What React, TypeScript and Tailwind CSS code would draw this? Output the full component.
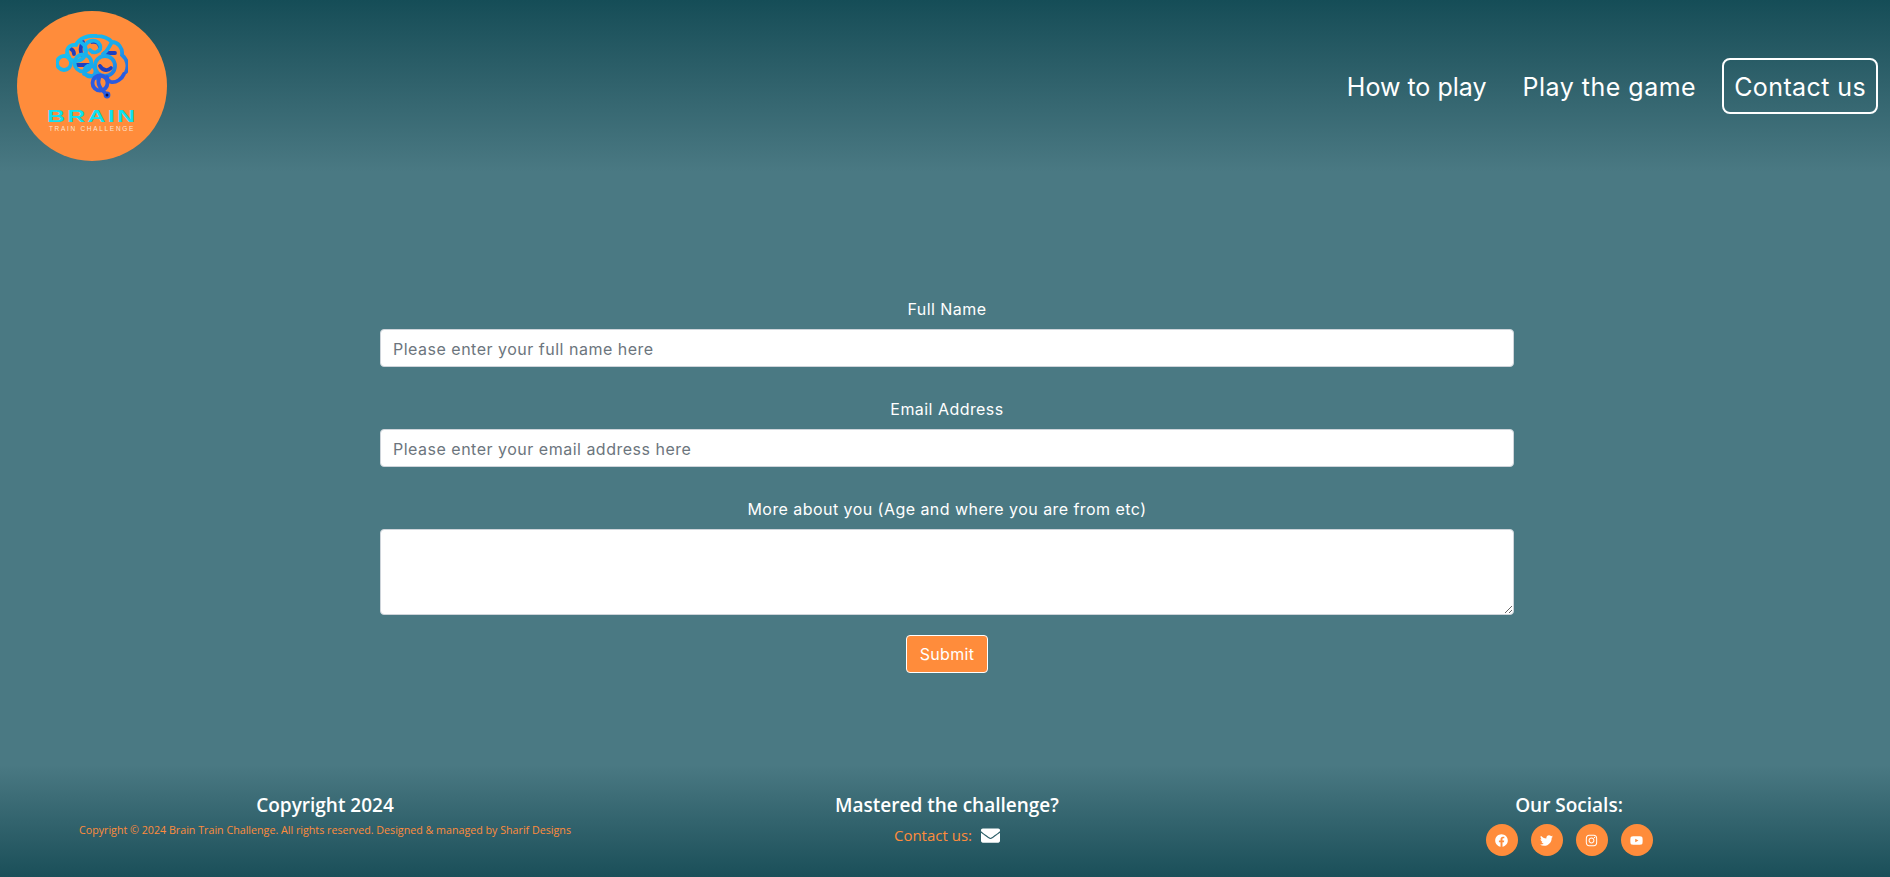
import { FaEnvelope, FaFacebook, FaInstagram, FaTwitter, FaYoutube } from "react-icons/fa";

function Brain() {
  return (
    <svg viewBox="56 34 72 66" className="w-[72px] h-[66px] shrink-0" fill="none" strokeLinecap="round">
      <defs>
        <linearGradient id="b" gradientUnits="userSpaceOnUse" x1="62" y1="38" x2="118" y2="92">
          <stop offset="0" stopColor="#17c4f2" />
          <stop offset="0.6" stopColor="#1aa6ea" />
          <stop offset="1" stopColor="#2b55dc" />
        </linearGradient>
      </defs>
      <g stroke="#1f3fbf" strokeWidth="3.8">
        <path d="M83 42c-3 5-3 9-1 13" />
        <path d="M71 49c2 1 3 3 3 5" />
        <path d="M76 65h13" />
        <path d="M105 53h10" />
        <path d="M100 66c3 5 8 5 11 2" />
        <path d="M92 42c5-1 8 2 8 6" />
      </g>
      <g stroke="url(#b)" strokeWidth="3.8">
        <circle cx="64" cy="63" r="7" />
        <path d="M69 57C64 49 70 44 76 45C79 38 88 35 97 36C103 36 108 38 112 42C118 42 123 48 122 55C127 59 129 66 126 72" />
        <circle cx="76" cy="51" r="10" strokeDasharray="38 25" transform="rotate(-60 76 51)" />
        <path d="M85 50C83 41 96 37 100 45C102 51 94 55 90 50" />
        <path d="M112 42c-3 5-5 10-9 12" />
        <circle cx="83" cy="63" r="8.5" />
        <circle cx="90" cy="71" r="5.5" />
        <circle cx="105" cy="66" r="10" />
        <path d="M84 74C90 76 94 76 98 79" />
      </g>
      <g stroke="#2a5be0" strokeWidth="3.8">
        <path d="M124 74c-2 5-8 9-13 8-3-1-4-3-4-5" />
        <circle cx="100" cy="83" r="7.5" />
        <path d="M100 76c-2 4-2 8 0 11 1 2 4 5 6 7" />
      </g>
      <circle cx="107" cy="95" r="3.4" fill="#2a5be0" />
      <circle cx="107" cy="95" r="1.5" fill="#0b1550" />
    </svg>
  );
}

function Logo() {
  return (
    <div className="w-[150px] h-[150px] rounded-full bg-[#ff8c3b] flex flex-col items-center pt-[23px] shrink-0">
      <Brain />
      <div className="mt-[10px] text-[#0fe0f0] text-[16px] leading-[13px] font-black tracking-[1.5px] font-['Liberation_Sans',sans-serif] scale-x-[1.55]">BRAIN</div>
      <div className="mt-[2px] text-[#fbe3cf] text-[6.5px] leading-[8px] tracking-[1.7px] font-['Liberation_Sans',sans-serif]">TRAIN CHALLENGE</div>
    </div>
  );
}

const inputClass =
  "block w-full h-[38px] px-3 pt-[1px] bg-white border border-[#ced4da] rounded-[4px] text-[16px] tracking-[0.5px] placeholder:text-[#6c757d] outline-none";
const labelClass = "h-[38px] text-white text-[16px] leading-[36px] tracking-[0.45px]";

function Field({ label, placeholder }: { label: string; placeholder: string }) {
  return (
    <div className="flex flex-col items-center w-full">
      <label className={labelClass}>{label}</label>
      <input className={inputClass} placeholder={placeholder} />
    </div>
  );
}

function Social({ children }: { children: React.ReactNode }) {
  return (
    <a className="w-8 h-8 rounded-full bg-[#ff8c3b] text-white text-[13px] flex items-center justify-center">{children}</a>
  );
}

export default function App() {
  return (
    <div className="h-[877px] flex flex-col bg-[#4a7983] font-['Inter',sans-serif] overflow-hidden">
      <header className="h-[172px] shrink-0 flex items-start justify-between pl-[17px] pr-[12px] pt-[11px] bg-gradient-to-b from-[#154d57] to-[#4a7983]">
        <Logo />
        <nav className="flex items-center gap-[22px] mt-[47px] text-white text-[25px]">
          <a className="px-3 h-[56px] flex items-center pt-[3px]">How to play</a>
          <a className="px-3 h-[56px] flex items-center pt-[3px] -ml-[10px] tracking-[0.5px]">Play the game</a>
          <a className="px-[10px] h-[56px] flex items-center pt-[3px] border-2 border-white rounded-[8px] -ml-[8px] tracking-[0.4px]">Contact us</a>
        </nav>
      </header>

      <main className="flex-1 pl-[380px] pr-[376px] pt-[119px]">
        <form className="flex flex-col gap-[24px]">
          <Field label="Full Name" placeholder="Please enter your full name here" />
          <Field label="Email Address" placeholder="Please enter your email address here" />
          <div className="flex flex-col items-center w-full">
            <label className={labelClass}>More about you (Age and where you are from etc)</label>
            <textarea className="block w-full h-[86px] px-3 py-1.5 bg-white border border-[#ced4da] rounded-[4px] outline-none" />
            <button type="button" className="mt-[20px] w-[82px] h-[38px] bg-[#ff8c3b] border border-white rounded-[4px] text-white text-[16px] tracking-[0.3px]">Submit</button>
          </div>
        </form>
      </main>

      <footer className="h-[112px] shrink-0 grid grid-cols-3 pl-[14px] pr-[10px] pt-[28px] bg-gradient-to-b from-[#4a7983] to-[#1a4f59] font-['Open_Sans',sans-serif]">
        <div className="flex flex-col items-center">
          <h3 className="text-white text-[19px] leading-[24px] font-semibold">Copyright 2024</h3>
          <p className="mt-[6px] text-[#ff8c3b] text-[10.7px] leading-[14px]">Copyright © 2024 Brain Train Challenge. All rights reserved. Designed &amp; managed by Sharif Designs</p>
        </div>
        <div className="flex flex-col items-center">
          <h3 className="text-white text-[19px] leading-[24px] font-semibold">Mastered the challenge?</h3>
          <p className="mt-[6px] text-[#ff8c3b] text-[15px] leading-[24px] flex items-center gap-[9px]">
            Contact us:
            <FaEnvelope className="text-white text-[19px]" />
          </p>
        </div>
        <div className="flex flex-col items-center">
          <h3 className="text-white text-[19px] leading-[24px] font-semibold">Our Socials:</h3>
          <div className="mt-[7px] flex gap-[13px]">
            <Social><FaFacebook /></Social>
            <Social><FaTwitter /></Social>
            <Social><FaInstagram /></Social>
            <Social><FaYoutube /></Social>
          </div>
        </div>
      </footer>
    </div>
  );
}
